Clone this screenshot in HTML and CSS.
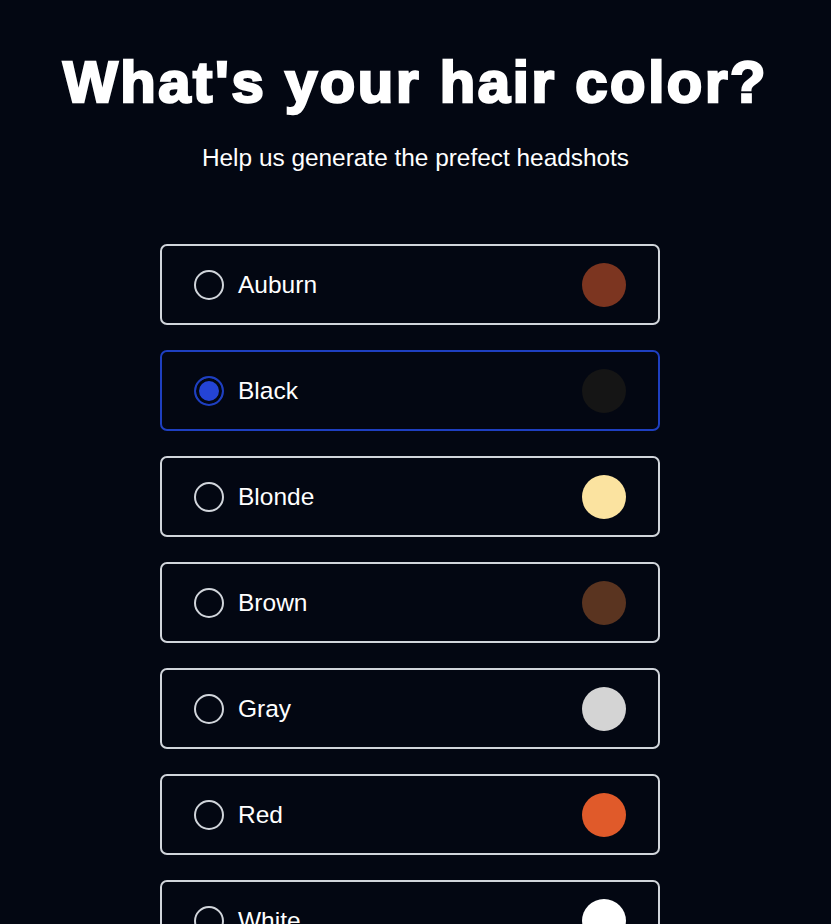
FILE: index.html
```
<!DOCTYPE html>
<html lang="en">
<head>
    <meta charset="UTF-8">
    <title>Hair color</title>
    <link rel="stylesheet" href="styles.css">
</head>
<body>
    <div class="page">
        <h1 class="title">What's your hair color?</h1>
        <p class="subtitle">Help us generate the prefect headshots</p>

        <div class="options">
            <label class="option">
                <span class="radio"></span>
                <span class="name">Auburn</span>
                <span class="swatch auburn"></span>
            </label>
            <label class="option selected">
                <span class="radio"></span>
                <span class="name">Black</span>
                <span class="swatch black"></span>
            </label>
            <label class="option">
                <span class="radio"></span>
                <span class="name">Blonde</span>
                <span class="swatch blonde"></span>
            </label>
            <label class="option">
                <span class="radio"></span>
                <span class="name">Brown</span>
                <span class="swatch brown"></span>
            </label>
            <label class="option">
                <span class="radio"></span>
                <span class="name">Gray</span>
                <span class="swatch gray"></span>
            </label>
            <label class="option">
                <span class="radio"></span>
                <span class="name">Red</span>
                <span class="swatch red"></span>
            </label>
            <label class="option">
                <span class="radio"></span>
                <span class="name">White</span>
                <span class="swatch white"></span>
            </label>
        </div>
    </div>

    <script>
        // 点击切换选中项
        document.querySelectorAll('.option').forEach(option => {
            option.addEventListener('click', () => {
                document.querySelectorAll('.option').forEach(o => o.classList.remove('selected'));
                option.classList.add('selected');
            });
        });
    </script>
</body>
</html>
```

FILE: styles.css
```
body {
    margin: 0;
    background-color: #030712;
    color: #ffffff;
    font-family: "Liberation Sans", Arial, sans-serif;
}

.page {
    display: flex;
    flex-direction: column;
    align-items: center;
    padding-top: 52px;
}

.title {
    margin: 0;
    font-size: 58px;
    font-weight: 700;
    line-height: 60px;
    -webkit-text-stroke: 2.5px #ffffff;
    letter-spacing: 2.6px;
}

.subtitle {
    margin: 31px 0 0;
    font-size: 24.4px;
    line-height: 30px;
}

.options {
    display: flex;
    flex-direction: column;
    gap: 25px;
    margin-top: 71px;
    margin-right: 11px;
    width: 500px;
}

.option {
    display: flex;
    align-items: center;
    height: 81px;
    padding: 0 32px;
    border: 2px solid #d1d5db;
    border-radius: 7px;
    box-sizing: border-box;
    cursor: pointer;
}

.radio {
    width: 30px;
    height: 30px;
    border: 2px solid #d1d5db;
    border-radius: 50%;
    box-sizing: border-box;
    flex-shrink: 0;
}

.name {
    flex: 1;
    margin-left: 14px;
    font-size: 24.5px;
}

.swatch {
    width: 44px;
    height: 44px;
    border-radius: 50%;
    flex-shrink: 0;
}

.option.selected {
    border-color: #1e3fc0;
}

.option.selected .radio {
    border: 2px solid #1e3fc0;
    background-color: #2444d6;
    box-shadow: inset 0 0 0 3px #030712;
}

.auburn { background-color: #7c3520; }
.black { background-color: #151515; }
.blonde { background-color: #fbe3a0; }
.brown { background-color: #5a3420; }
.gray { background-color: #d4d4d4; }
.red { background-color: #e05a2a; }
.white { background-color: #ffffff; }
```
